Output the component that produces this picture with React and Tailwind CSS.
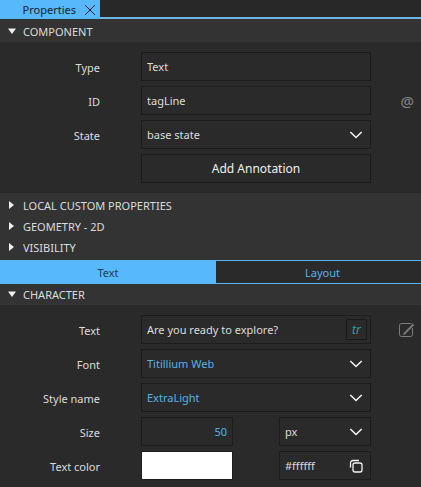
import React from "react";

const control =
  "block h-[29px] w-full min-w-0 appearance-none rounded-none border border-[#1d1d1d] bg-[#2a2a2a] px-[5px] outline-none";

function Row({ label, htmlFor, action, children }) {
  return (
    <div className="grid grid-cols-[100px_minmax(0,1fr)_50px] items-center">
      {label ? (
        <label htmlFor={htmlFor} className="pt-[2px] text-right text-[#dcdcdc]">
          {label}
        </label>
      ) : (
        <span />
      )}
      <div className="pl-[41px]">{children}</div>
      <div className="flex justify-end pr-[7px]">{action}</div>
    </div>
  );
}

function Arrow({ open }) {
  return (
    <svg className="-mt-[2px]" width="8" height="8" viewBox="0 0 8 8" fill="#f0f0f0" aria-hidden="true">
      <path d={open ? "M0 1.5H8L4 7Z" : "M1 0V8L6 4Z"} />
    </svg>
  );
}

function SectionHeader({ title, open = false }) {
  return (
    <button
      type="button"
      aria-expanded={open}
      className="flex h-[21px] w-full items-center gap-[7px] bg-[#333333] px-2 text-left text-[#dcdcdc]"
    >
      <Arrow open={open} />
      {title}
    </button>
  );
}

function Select({ id, value, label, blue = false }) {
  return (
    <div className="relative">
      <select
        id={id}
        aria-label={label}
        defaultValue={value}
        className={`${control} ${blue ? "text-[#57b1e8]" : "text-[#dcdcdc]"}`}
      >
        <option>{value}</option>
      </select>
      <svg
        className="pointer-events-none absolute top-[11px] right-2 h-2 w-[14px]"
        viewBox="0 0 14 8"
        fill="none"
        stroke="#f2f2f2"
        strokeWidth="1.6"
        aria-hidden="true"
      >
        <path d="M1.3 1L7 6.5L12.7 1" />
      </svg>
    </div>
  );
}

export default function App() {
  return (
    <main className="min-h-screen bg-[#2a2a2a] font-['Noto_Sans',sans-serif] text-[11px] leading-4">
      <div className="flex h-[19px] border-b-2 border-[#6db3e4] bg-[#282828]">
        <div className="-mb-[2px] flex h-[19px] w-[100px] items-center justify-end gap-2 bg-[#57b9fc] pr-1 text-[#14222e]">
          <button type="button">Properties</button>
          <button type="button" aria-label="Close Properties">
            <svg width="12" height="12" viewBox="0 0 12 12" fill="none" stroke="#14222e" aria-hidden="true">
              <path d="M1 1L11 11M11 1L1 11" />
            </svg>
          </button>
        </div>
      </div>

      <div className="bg-[#333333] pt-[2px]">
        <SectionHeader title="COMPONENT" open />
      </div>
      <section className="flex flex-col gap-[5px] py-[10px]">
        <Row label="Type" htmlFor="type">
          <input id="type" defaultValue="Text" className={`${control} text-[#dcdcdc]`} />
        </Row>
        <Row
          label="ID"
          htmlFor="id"
          action={
            <button type="button" aria-label="Export as alias" className="text-[15px] text-[#858585]">
              @
            </button>
          }
        >
          <input id="id" defaultValue="tagLine" className={`${control} text-[#dcdcdc]`} />
        </Row>
        <Row label="State" htmlFor="state">
          <Select id="state" value="base state" />
        </Row>
        <Row>
          <button type="button" className={`${control} text-[12px] text-[#f0f0f0]`}>
            Add Annotation
          </button>
        </Row>
      </section>

      <div className="bg-[#333333] py-[2px]">
        <SectionHeader title="LOCAL CUSTOM PROPERTIES" />
        <SectionHeader title="GEOMETRY - 2D" />
        <SectionHeader title="VISIBILITY" />
      </div>

      <div
        role="tablist"
        className="grid h-6 grid-cols-[216fr_205fr] border-y border-[#57b9fc] bg-[#2a2a2a]"
      >
        <button type="button" role="tab" aria-selected="true" className="bg-[#57b9fc] pt-[2px] text-[#1f3a50]">
          Text
        </button>
        <button type="button" role="tab" aria-selected="false" className="pt-[2px] pl-2 text-[#57b1e8]">
          Layout
        </button>
      </div>

      <SectionHeader title="CHARACTER" open />
      <section className="flex flex-col gap-[5px] pt-[10px] pb-[7px]">
        <Row
          label="Text"
          htmlFor="text"
          action={
            <button type="button" aria-label="Open text editor">
              <svg width="16" height="16" viewBox="0 0 16 16" fill="none" stroke="#7c7c7c" aria-hidden="true">
                <path d="M14.5 6V12.5A2 2 0 0 1 12.5 14.5H3.5A2 2 0 0 1 1.5 12.5V3.5A2 2 0 0 1 3.5 1.5H12.5A2 2 0 0 1 14 2.2" />
                <path d="M15.5 2.5L7 11" strokeWidth="1.8" />
                <path d="M5 13L6 10L8 12Z" fill="#7c7c7c" stroke="none" />
              </svg>
            </button>
          }
        >
          <div className="flex h-[29px] items-center border border-[#1d1d1d] pr-[3px] pl-[5px]">
            <input
              id="text"
              defaultValue="Are you ready to explore?"
              className="min-w-0 flex-1 bg-transparent text-[#dcdcdc] outline-none"
            />
            <button
              type="button"
              aria-label="Translate text"
              className="flex h-[21px] w-[21px] items-center justify-center border border-[#1a1a1a] text-[12px] text-[#2fa3a8] italic"
            >
              tr
            </button>
          </div>
        </Row>
        <Row label="Font" htmlFor="font">
          <Select id="font" value="Titillium Web" blue />
        </Row>
        <Row label="Style name" htmlFor="style">
          <Select id="style" value="ExtraLight" blue />
        </Row>
        <Row label="Size" htmlFor="size">
          <div className="grid grid-cols-2 gap-[46px]">
            <input id="size" defaultValue="50" className={`${control} text-right text-[#57b1e8]`} />
            <Select label="Size unit" value="px" />
          </div>
        </Row>
        <Row label="Text color" htmlFor="color">
          <div className="grid grid-cols-2 gap-[46px]">
            <input
              id="color"
              type="color"
              defaultValue="#ffffff"
              className="h-[29px] w-full appearance-none border border-[#1d1d1d] bg-white p-0 [&::-webkit-color-swatch-wrapper]:p-0 [&::-webkit-color-swatch]:border-none"
            />
            <div className="flex h-[29px] items-center border border-[#1d1d1d] pr-[7px] pl-[5px]">
              <input
                aria-label="Color value"
                defaultValue="#ffffff"
                className="w-0 min-w-0 flex-1 bg-transparent text-[#dcdcdc] outline-none"
              />
              <button type="button" aria-label="Copy color">
                <svg width="14" height="14" viewBox="0 0 14 14" fill="none" stroke="#f2f2f2" strokeWidth="1.3" aria-hidden="true">
                  <rect x="4" y="4" width="9" height="9" rx="2" />
                  <path d="M1.5 8.5V4A2.5 2.5 0 0 1 4 1.5H10" />
                </svg>
              </button>
            </div>
          </div>
        </Row>
      </section>
    </main>
  );
}
